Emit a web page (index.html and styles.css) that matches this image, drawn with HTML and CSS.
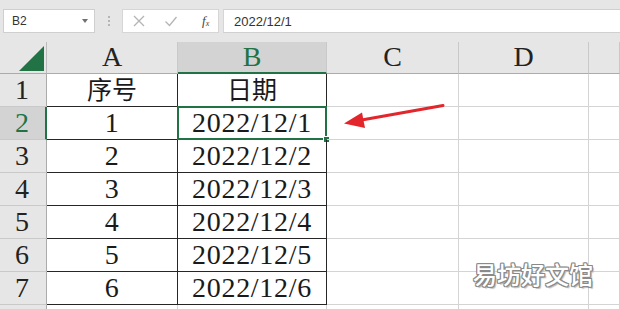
FILE: index.html
```html
<!DOCTYPE html>
<html lang="zh">
<head>
<meta charset="utf-8">
<link rel="stylesheet" href="styles.css">
</head>
<body>
<div class="page">
  <div class="toolbar">
    <div class="namebox">
      <span class="name">B2</span>
      <span class="caret"></span>
    </div>
    <div class="grip"><i></i><i></i><i></i></div>
    <div class="iconbox">
      <svg class="ico" width="14" height="14" viewBox="0 0 14 14"><path d="M2 2 L12 12 M12 2 L2 12" stroke="#b4b4b4" stroke-width="1.3" fill="none"/></svg>
      <svg class="ico" width="14" height="14" viewBox="0 0 14 14"><path d="M1.5 7.5 L5.5 11.5 L12.5 3" stroke="#b4b4b4" stroke-width="1.3" fill="none"/></svg>
      <span class="fx">f<sub>x</sub></span>
    </div>
    <div class="formula">2022/12/1</div>
  </div>

  <div class="sheet">
    <div class="corner"><span class="tri"></span></div>
    <div class="colhdr">A</div>
    <div class="colhdr sel">B</div>
    <div class="colhdr">C</div>
    <div class="colhdr">D</div>
    <div class="colhdr"></div>

    <div class="rowhdr">1</div>
    <div class="c t cjk">序号</div>
    <div class="c t cjk">日期</div>
    <div class="c"></div><div class="c"></div><div class="c"></div>

    <div class="rowhdr sel">2</div>
    <div class="c t">1</div>
    <div class="c t active">2022/12/1<span class="selbox"><span class="handle"></span></span></div>
    <div class="c"></div><div class="c"></div><div class="c"></div>

    <div class="rowhdr">3</div>
    <div class="c t">2</div>
    <div class="c t">2022/12/2</div>
    <div class="c"></div><div class="c"></div><div class="c"></div>

    <div class="rowhdr">4</div>
    <div class="c t">3</div>
    <div class="c t">2022/12/3</div>
    <div class="c"></div><div class="c"></div><div class="c"></div>

    <div class="rowhdr">5</div>
    <div class="c t">4</div>
    <div class="c t">2022/12/4</div>
    <div class="c"></div><div class="c"></div><div class="c"></div>

    <div class="rowhdr">6</div>
    <div class="c t">5</div>
    <div class="c t">2022/12/5</div>
    <div class="c"></div><div class="c"></div><div class="c"></div>

    <div class="rowhdr">7</div>
    <div class="c t">6</div>
    <div class="c t">2022/12/6</div>
    <div class="c"></div><div class="c"></div><div class="c"></div>

    <div class="rowhdr"></div>
    <div class="c"></div><div class="c"></div>
    <div class="c"></div><div class="c"></div><div class="c"></div>
  </div>

  <svg class="arrow" width="620" height="309" viewBox="0 0 620 309">
    <line x1="443" y1="105.5" x2="356" y2="121" stroke="#e3262b" stroke-width="3" stroke-linecap="round"/>
    <path d="M344 123.5 L362 112.5 L365 128 Z" fill="#e3262b"/>
  </svg>

  <div class="watermark">易坊好文馆</div>
</div>
</body>
</html>
```

FILE: styles.css
```css
html, body {
  margin: 0;
  padding: 0;
  background: #fff;
  overflow: hidden;
}
.page {
  position: relative;
  width: 620px;
  height: 309px;
  overflow: hidden;
}
.toolbar {
  height: 42px;
  background: #e6e6e6;
  display: flex;
  align-items: flex-start;
  padding-top: 9px;
  box-sizing: border-box;
  font-family: "Liberation Sans", "Noto Sans", sans-serif;
}
.namebox {
  margin-left: 3px;
  width: 92px;
  height: 24px;
  box-sizing: border-box;
  background: #fff;
  border: 1px solid #cfcfcf;
  display: flex;
  align-items: center;
  justify-content: space-between;
  padding: 0 6px 0 8px;
}
.name {
  font-size: 12px;
  color: #333;
}
.caret {
  width: 0;
  height: 0;
  border-left: 3.5px solid transparent;
  border-right: 3.5px solid transparent;
  border-top: 4px solid #707070;
}
.grip {
  width: 27px;
  height: 24px;
  display: flex;
  flex-direction: column;
  align-items: center;
  justify-content: center;
  gap: 2px;
}
.grip i {
  display: block;
  width: 2px;
  height: 2px;
  background: #b5b5b5;
}
.iconbox {
  width: 97px;
  height: 24px;
  box-sizing: border-box;
  background: #fff;
  border: 1px solid #d6d6d6;
  display: flex;
  align-items: center;
  padding-left: 9px;
  gap: 18px;
}
.fx {
  font-family: "Liberation Serif", serif;
  font-style: italic;
  font-size: 13px;
  color: #444;
  margin-left: 6px;
}
.fx sub {
  font-size: 8px;
  vertical-align: -1px;
}
.formula {
  margin-left: 4px;
  flex: 1;
  height: 24px;
  box-sizing: border-box;
  background: #fff;
  border-top: 1px solid #d0d0d0;
  border-bottom: 1px solid #d0d0d0;
  border-left: 1px solid #d6d6d6;
  padding-left: 10px;
  font-size: 13px;
  color: #333;
  display: flex;
  align-items: center;
}

.sheet {
  display: grid;
  grid-template-columns: 47px 131px 149px 132px 130px 1fr;
  grid-template-rows: 32px repeat(8, 33px);
  font-family: "Liberation Serif", "Noto Sans CJK SC", serif;
  font-size: 28px;
  color: #1a1a1a;
}
.sheet > div {
  box-sizing: border-box;
}
.corner {
  background: #e6e6e6;
  border-right: 1px solid #bcbcbc;
  border-bottom: 1px solid #ababab;
  position: relative;
}
.tri {
  position: absolute;
  left: 19px;
  top: 4px;
  width: 0;
  height: 0;
  border-left: 25px solid transparent;
  border-bottom: 25px solid #217346;
}
.colhdr {
  background: #e6e6e6;
  border-right: 1px solid #c9c9c9;
  border-bottom: 1px solid #ababab;
  display: flex;
  align-items: flex-end;
  justify-content: center;
  padding-bottom: 2px;
  color: #222;
  line-height: 1;
}
.colhdr.sel {
  background: #d3d3d3;
  color: #217346;
  border-bottom: 2px solid #217346;
  padding-bottom: 1px;
}
.rowhdr {
  background: #e6e6e6;
  border-right: 1px solid #ababab;
  border-bottom: 1px solid #c9c9c9;
  display: flex;
  align-items: flex-end;
  justify-content: center;
  padding-bottom: 2px;
  padding-right: 2px;
  color: #222;
  line-height: 1;
}
.rowhdr.sel {
  background: #d3d3d3;
  color: #217346;
  border-right: 2px solid #217346;
  padding-right: 1px;
}
.c {
  border-right: 1px solid #d4d4d4;
  border-bottom: 1px solid #d4d4d4;
  display: flex;
  align-items: flex-end;
  justify-content: center;
  padding-bottom: 2px;
  line-height: 1;
  letter-spacing: 0.7px;
  position: relative;
}
.c.t {
  border-right-color: #262626;
  border-bottom-color: #262626;
}
.c.cjk {
  font-size: 25px;
  padding-bottom: 3px;
  letter-spacing: 0;
}
.selbox {
  position: absolute;
  left: -1px;
  top: -1px;
  right: -1px;
  bottom: -1px;
  border: 2px solid #217346;
}
.handle {
  position: absolute;
  right: -5px;
  bottom: -5px;
  width: 5px;
  height: 5px;
  background: #217346;
  border: 1px solid #fff;
}
.arrow {
  position: absolute;
  left: 0;
  top: 0;
  pointer-events: none;
}
.watermark {
  position: absolute;
  left: 473px;
  top: 262px;
  font-family: "Noto Sans CJK SC", sans-serif;
  font-weight: 500;
  font-size: 24px;
  line-height: 1;
  color: #fff;
  text-shadow:
    1px 0 0 #8a8a8a, -1px 0 0 #8a8a8a, 0 1px 0 #8a8a8a, 0 -1px 0 #8a8a8a,
    1px 1px 0 #8a8a8a, -1px -1px 0 #8a8a8a, 1px -1px 0 #8a8a8a, -1px 1px 0 #8a8a8a,
    2px 2px 1px #bdbdbd;
}
```
